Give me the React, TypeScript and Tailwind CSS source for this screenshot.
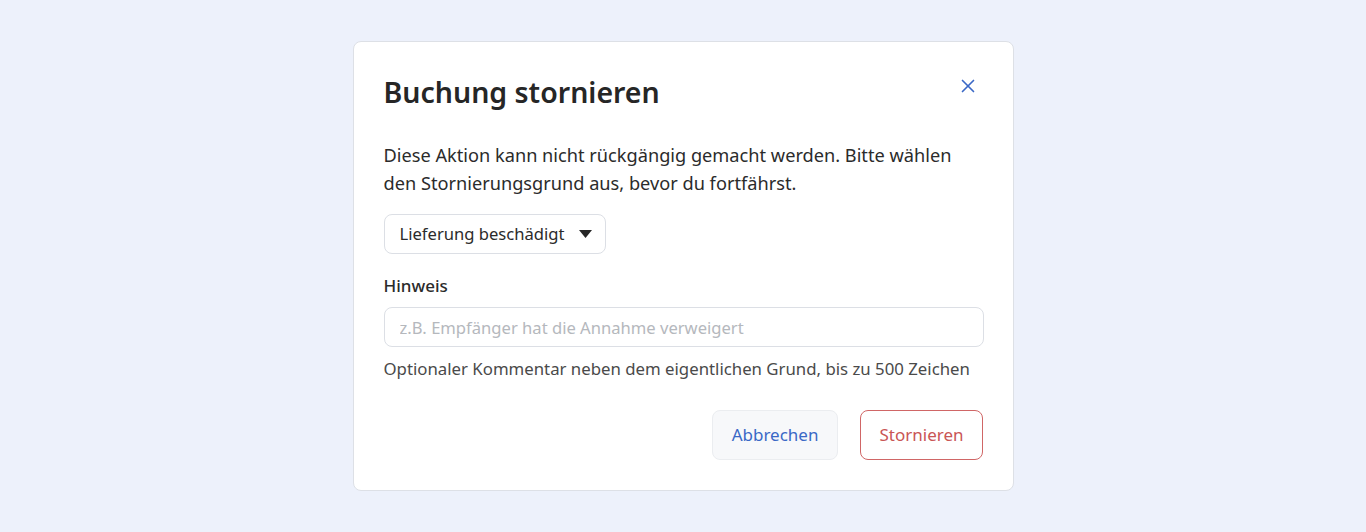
import { X } from "lucide-react";

function Select() {
  return (
    <button className="flex h-[40px] w-[222px] items-center justify-between rounded-lg border border-[#dcdfe5] bg-white pl-[15px] pr-[13px] text-[16.6px] text-[#2b2b2b]">
      <span>Lieferung beschädigt</span>
      <svg width="13" height="8" viewBox="0 0 13 8" className="shrink-0">
        <path d="M0 0h13L6.5 8z" fill="#262626" />
      </svg>
    </button>
  );
}

export default function App() {
  return (
    <div className="flex h-[532px] w-full items-start justify-center bg-[#edf1fb] pt-[41px] font-['Noto_Sans',sans-serif]">
      <div className="w-[661px] rounded-lg border border-[#dde0e6] bg-white px-[30px] pb-[30px] pt-[30px]">
        <div className="flex items-start justify-between">
          <h2 className="text-[28.5px] font-semibold leading-[40px] text-[#262626]">Buchung stornieren</h2>
          <button className="mr-[4px] mt-[3px] text-[#3a68c6]">
            <X size={22} strokeWidth={1.8} />
          </button>
        </div>
        <p className="mt-[29px] text-[18.2px] leading-[28px] text-[#2b2b2b]">
          Diese Aktion kann nicht rückgängig gemacht werden. Bitte wählen den Stornierungsgrund aus, bevor du fortfährst.
        </p>
        <div className="mt-[17px]">
          <Select />
        </div>
        <label className="mt-[19px] block text-[17px] font-medium leading-[26px] text-[#2b2b2b]">Hinweis</label>
        <input
          className="mt-[8px] block h-[40px] w-[600px] rounded-lg border border-[#dcdfe5] px-[15px] text-[16.6px] text-[#2b2b2b] outline-none placeholder:text-[#b5b8bd]"
          placeholder="z.B. Empfänger hat die Annahme verweigert"
        />
        <p className="mt-[9px] text-[16.8px] leading-[26px] text-[#4a4a4a]">
          Optionaler Kommentar neben dem eigentlichen Grund, bis zu 500 Zeichen
        </p>
        <div className="mt-[28px] flex justify-end gap-[22px]">
          <button className="h-[50px] rounded-lg border border-[#ebedf0] bg-[#f7f8fa] px-[19px] text-[17px] text-[#3a68c6]">Abbrechen</button>
          <button className="h-[50px] rounded-lg border-[1.5px] border-[#d06666] bg-white px-[18px] text-[17px] text-[#c95555]">Stornieren</button>
        </div>
      </div>
    </div>
  );
}
